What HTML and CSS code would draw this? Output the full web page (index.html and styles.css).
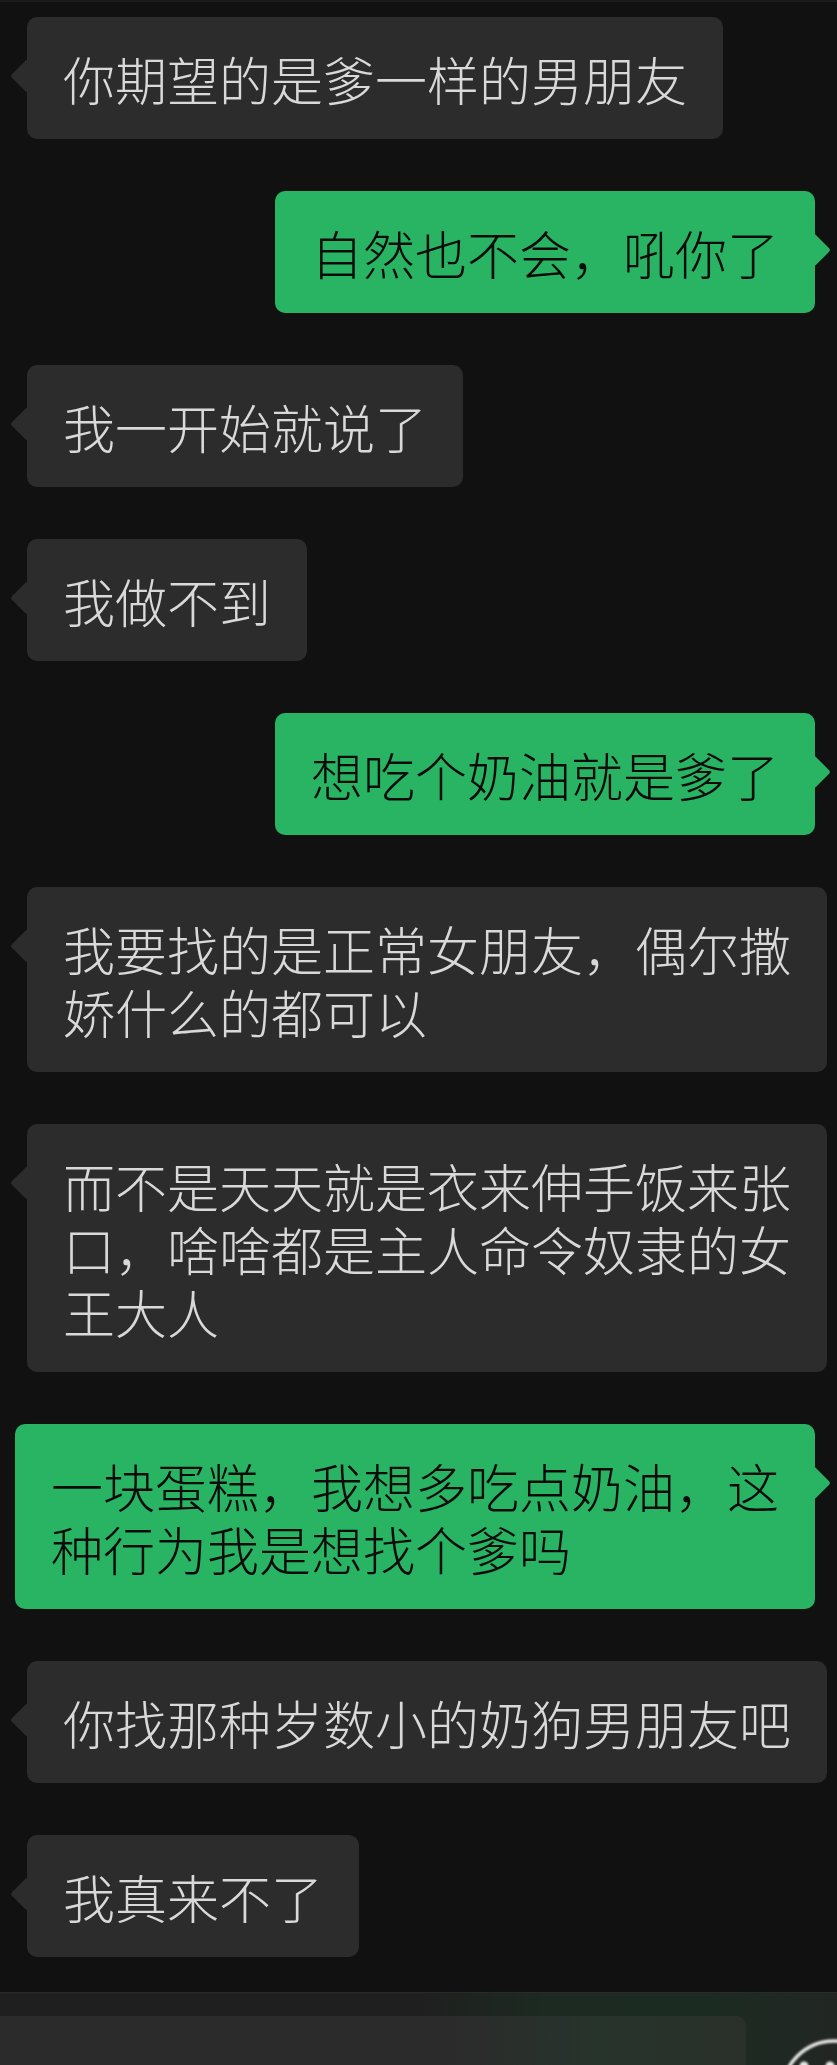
FILE: index.html
```html
<!DOCTYPE html>
<html lang="zh-CN">
<head>
<meta charset="utf-8">
<title>聊天记录</title>
<link rel="stylesheet" href="styles.css">
</head>
<body>
<div class="screen">
  <div class="top-strip"></div>
  <main class="chat">
    <div class="msg left"><div class="bubble">你期望的是爹一样的男朋友</div></div>
    <div class="msg right"><div class="bubble">自然也不会，吼你了</div></div>
    <div class="msg left"><div class="bubble">我一开始就说了</div></div>
    <div class="msg left"><div class="bubble">我做不到</div></div>
    <div class="msg right"><div class="bubble">想吃个奶油就是爹了</div></div>
    <div class="msg left"><div class="bubble">我要找的是正常女朋友，偶尔撒娇什么的都可以</div></div>
    <div class="msg left"><div class="bubble">而不是天天就是衣来伸手饭来张口，啥啥都是主人命令奴隶的女王大人</div></div>
    <div class="msg right"><div class="bubble">一块蛋糕，我想多吃点奶油，这种行为我是想找个爹吗</div></div>
    <div class="msg left"><div class="bubble">你找那种岁数小的奶狗男朋友吧</div></div>
    <div class="msg left"><div class="bubble">我真来不了</div></div>
  </main>
  <footer class="input-bar">
    <div class="input-box"></div>
    <div class="emoji-btn">
      <svg width="60" height="48" viewBox="0 0 60 48">
        <circle cx="54" cy="76" r="52" fill="none" stroke="#e8e8e8" stroke-width="3.5"/>
        <circle cx="24" cy="49" r="4.5" fill="#e8e8e8"/>
        <circle cx="50" cy="49" r="4.5" fill="#e8e8e8"/>
      </svg>
    </div>
  </footer>
</div>
</body>
</html>
```

FILE: styles.css
```css
html, body {
  margin: 0;
  padding: 0;
  background: #111111;
}

.screen {
  width: 837px;
  height: 2065px;
  overflow: hidden;
  display: flex;
  flex-direction: column;
  background: #111111;
  font-family: "Noto Sans CJK SC", "Noto Sans", sans-serif;
}

.top-strip {
  height: 2px;
  flex: none;
  background: #1b1b1b;
}

.chat {
  display: flex;
  flex-direction: column;
  gap: 52px;
  padding: 15px 0 35px;
}

.msg {
  display: flex;
}

.msg.left {
  justify-content: flex-start;
  padding-left: 27px;
}

.msg.right {
  justify-content: flex-end;
  padding-right: 22px;
}

.bubble {
  position: relative;
  box-sizing: border-box;
  max-width: 800px;
  padding: 29.5px 36px;
  border-radius: 10px;
  font-size: 52px;
  font-weight: 300;
  line-height: 63px;
  word-break: break-all;
}

.bubble::before {
  content: "";
  position: absolute;
  top: 47px;
  width: 24px;
  height: 24px;
  border-radius: 3px;
  transform: rotate(45deg);
}

.left .bubble {
  background: #2c2c2c;
  color: #d9d9d9;
}

.left .bubble::before {
  left: -12px;
  background: #2c2c2c;
}

.right .bubble {
  background: #29b463;
  color: #0b0b0b;
}

.right .bubble::before {
  right: -11px;
  background: #29b463;
}

.input-bar {
  flex: 1;
  display: flex;
  align-items: flex-start;
  gap: 34px;
  padding-top: 23px;
  border-top: 1px solid #2a2a2a;
  background: linear-gradient(90deg, #1f1f1f 0%, #1f1f1f 50%, #1c2a21 65%, #1c2b22 85%, #222623 100%);
}

.input-box {
  width: 746px;
  height: 60px;
  flex: none;
  border-radius: 0 10px 0 0;
  background: linear-gradient(90deg, #2b2b2b 0%, #2b2b2b 60%, #27342c 80%, #293029 100%);
}

.emoji-btn {
  flex: none;
  padding-top: 1px;
  filter: blur(1px);
}

.emoji-btn svg {
  display: block;
  overflow: visible;
}
```
